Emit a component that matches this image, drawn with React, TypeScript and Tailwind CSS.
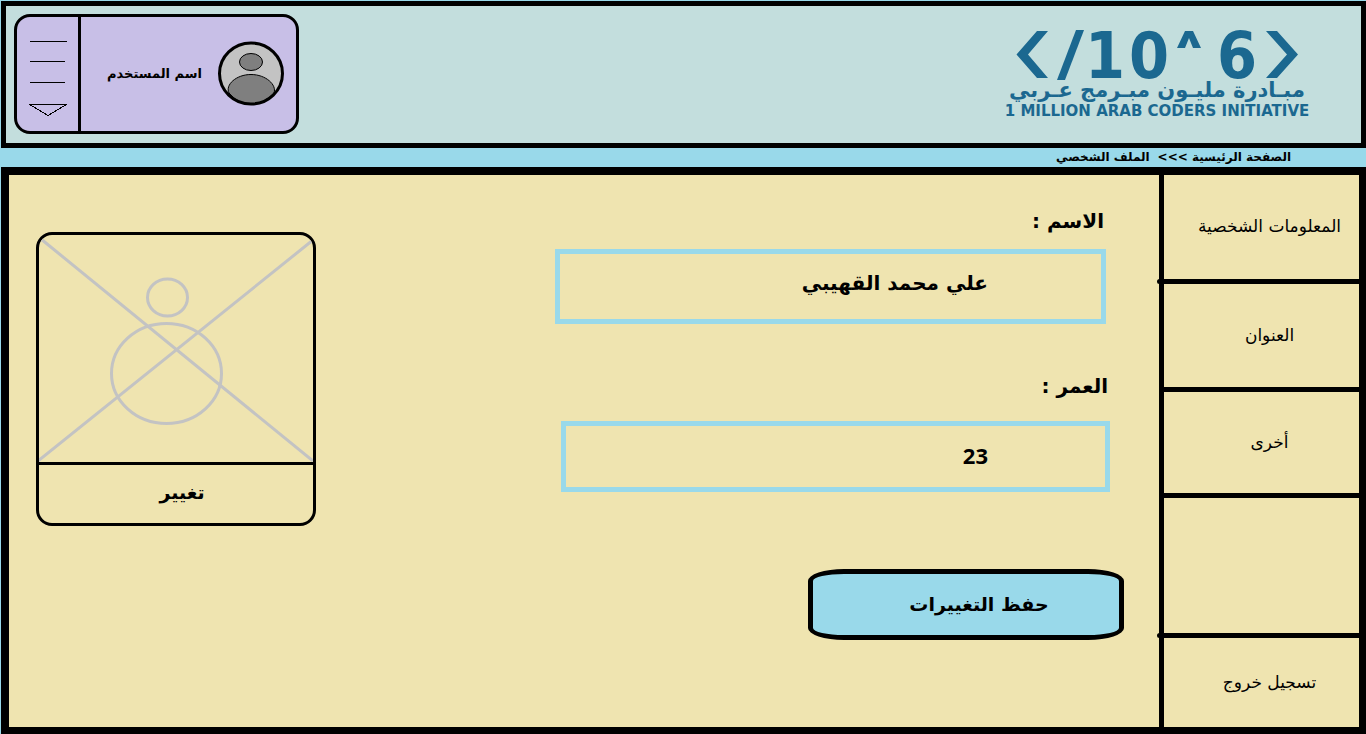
import React from "react";

function Logo() {
  return (
    <svg
      className="h-[106px] w-[310px] shrink-0 fill-[#1b6890] font-['DejaVu_Sans',sans-serif] font-bold"
      viewBox="1002 16 310 106"
      role="img"
      aria-label="1 Million Arab Coders Initiative"
    >
      <path d="M1037 31H1048L1028 54.500L1048 78H1037L1016.500 54.500Z" />
      <path d="M1076 30H1084L1065 80H1057Z" />
      <path d="M1185 31H1193L1201 48H1193L1189 38L1185 48H1177Z" />
      <path d="M1277 31H1266L1287 54.500L1266 78H1277L1298 54.500Z" />
      <g className="font-['DejaVu_Sans_Condensed','DejaVu_Sans',sans-serif] font-stretch-condensed" fontSize="64" textAnchor="middle" direction="ltr">
        <text x="1105" y="78">1</text>
        <text x="1149" y="78">0</text>
        <text x="1237" y="78">6</text>
      </g>
      <text x="1157" y="97" fontSize="21" textAnchor="middle" direction="rtl">مبـادرة مليـون مبـرمج عـربي</text>
      <text x="1157" y="116" fontSize="15" textAnchor="middle" direction="ltr">1 MILLION ARAB CODERS INITIATIVE</text>
    </svg>
  );
}

function UserCard() {
  return (
    <div className="flex h-[120px] w-[285px] shrink-0 rounded-[16px] border-3 border-black bg-[#c8bfe7]">
      <div className="flex flex-1 items-center gap-4 pr-3">
        <svg className="h-[66px] w-[66px]" viewBox="218 40 66 66" aria-hidden="true">
          <ellipse cx="251" cy="72.500" rx="31.500" ry="30.500" fill="#c3c3c3" />
          <ellipse cx="251" cy="61" rx="11.500" ry="8.500" fill="#7f7f7f" stroke="#000" />
          <path d="M229 92C225 84 236 73.500 251 73.500S277 84 274 92Q264 103 251 103T229 92Z" fill="#7f7f7f" stroke="#000" />
          <ellipse cx="251" cy="72.500" rx="31.500" ry="30.500" fill="none" stroke="#000" strokeWidth="3" />
        </svg>
        <span className="text-[13px] font-bold">اسم المستخدم</span>
      </div>
      <button type="button" aria-label="القائمة" className="flex w-[64px] items-center justify-center border-r-3 border-black">
        <svg className="h-[80px] w-[40px]" viewBox="28 34 40 80" fill="none" stroke="#000" overflow="visible" aria-hidden="true" shapeRendering="crispEdges">
          <path d="M30 41.500H67M30 61.500H65M30 82.500H65M29.500 104.500H66.500L48 115.500Z" />
        </svg>
      </button>
    </div>
  );
}

const cell =
  "relative flex w-full items-center justify-center pl-4 text-[17px]";
const knob =
  "after:absolute after:-bottom-[5px] after:-left-[7px] after:size-[5px] after:rounded-full after:bg-black";

function Sidebar() {
  return (
    <nav className="flex w-[200px] shrink-0 flex-col border-l-5 border-black">
      <a href="#info" className={`${cell} ${knob} h-[109px] border-b-5 border-black`}>المعلومات الشخصية</a>
      <a href="#address" className={`${cell} h-[108px] border-b-5 border-black`}>العنوان</a>
      <a href="#other" className={`${cell} h-[106px] border-b-5 border-black`}>أخرى</a>
      <div className={`${cell} ${knob} min-h-[140px] flex-1 border-b-5 border-black`} />
      <a href="#logout" className={`${cell} h-[89px]`}>تسجيل خروج</a>
    </nav>
  );
}

function Photo() {
  return (
    <section className="mt-[57px] ml-[27px] flex h-[294px] w-[280px] shrink-0 flex-col overflow-hidden rounded-[16px] border-3 border-black">
      <svg className="h-[227px] w-full" viewBox="39 235 274 227" fill="none" stroke="#c3c3c3" strokeWidth="3" aria-hidden="true">
        <path d="M41 239L313 461M313 240L38 461" />
        <ellipse cx="167.500" cy="297.500" rx="20" ry="18.500" />
        <ellipse cx="166.500" cy="373.500" rx="55" ry="50" />
      </svg>
      <button type="button" className="flex-1 border-t-3 border-black pb-1 pl-3 text-[19px] font-bold">
        تغيير
      </button>
    </section>
  );
}

const label = "block pr-0.5 text-[20px] leading-8 font-bold";
const field =
  "block w-full border-5 border-[#99d9ea] bg-transparent font-bold outline-none";

export default function App() {
  return (
    <div dir="rtl" className="flex min-h-screen flex-col bg-[#99d9ea] pt-px pl-px font-['DejaVu_Sans',sans-serif] text-black">
      <header className="flex items-start justify-between border-5 border-black bg-[#c3dedd] pt-2 pr-[49px] pb-[9px] pl-2">
        <div className="pt-0.5">
          <Logo />
        </div>
        <UserCard />
      </header>

      <nav className="flex h-[19px] items-center gap-2 pr-[75px] text-[12px] leading-[19px] font-bold">
        <a href="#home">الصفحة الرئيسية &gt;&gt;&gt;</a>
        <a href="#profile">الملف الشخصي</a>
      </nav>

      <main className="flex flex-1 border-t-8 border-r-7 border-b-7 border-l-8 border-black bg-[#efe4b0]">
        <Sidebar />
        <div className="flex flex-1 justify-between">
          <form className="w-full max-w-[604px] pt-[30px]" onSubmit={(e) => e.preventDefault()}>
            <div className="pr-[53px]">
              <label htmlFor="name" className={`${label} mb-3`}>الاسم :</label>
              <input id="name" className={`${field} h-[75px] pr-[113px] pb-2 text-[20px]`} defaultValue="علي محمد القهيبي" />
            </div>
            <div className="mt-[46px] mr-[49px] max-w-[549px]">
              <label htmlFor="age" className={`${label} mb-[19px]`}>العمر :</label>
              <input id="age" inputMode="numeric" className={`${field} h-[71px] pr-[117px] pb-1 font-['Open_Sans',sans-serif] text-[22px]`} defaultValue="23" />
            </div>
            <button type="submit" className="mt-[77px] mr-[35px] h-[71px] w-[316px] rounded-[36px/12px] border-5 border-black bg-[#99d9ea] pl-[26px] text-[19px] font-bold">
              حفظ التغييرات
            </button>
          </form>
          <Photo />
        </div>
      </main>
    </div>
  );
}
